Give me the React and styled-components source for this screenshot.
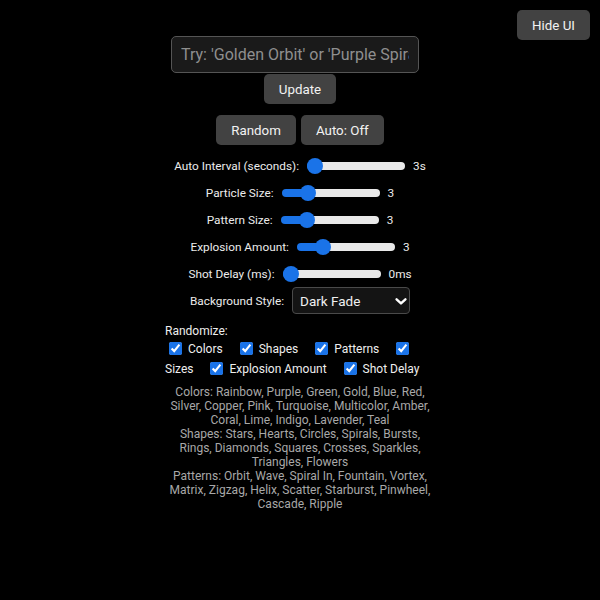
import React, { useState } from "react";
import styled, { createGlobalStyle } from "styled-components";

const Global = createGlobalStyle`
  html, body { margin: 0; padding: 0; background: #000; }
  body { font-family: Roboto, "Liberation Sans", sans-serif; color: #eee; }
  * { box-sizing: border-box; }
`;

const Page = styled.div`
  position: relative;
  width: 600px;
  min-height: 600px;
  background: #000;
  padding-top: 36px;
  display: flex;
  justify-content: center;
`;

const Button = styled.button`
  height: 30px;
  padding: 0 15px;
  border: none;
  border-radius: 5px;
  background: #424242;
  color: #f2f2f2;
  font-family: Roboto, "Liberation Sans", sans-serif;
  font-size: 13.33px;
  cursor: pointer;
`;

const HideButton = styled(Button)`
  position: absolute;
  top: 10px;
  right: 10px;
`;

const Panel = styled.div`
  width: 270px;
  display: flex;
  flex-direction: column;
  align-items: center;
`;

const Form = styled.div`
  width: 270px;
  display: flex;
  flex-wrap: wrap;
  justify-content: center;
  row-gap: 1px;
`;

const TextInput = styled.input`
  width: 248px;
  height: 37px;
  margin-right: 10px;
  padding: 0 9px;
  border: 1.5px solid #555;
  border-radius: 5px;
  background: #1a1a1a;
  color: #eee;
  font-family: Roboto, "Liberation Sans", sans-serif;
  font-size: 16px;
  outline: none;
  &::placeholder { color: #8f8f8f; }
`;

const ButtonRow = styled.div`
  display: flex;
  gap: 5px;
  margin-top: 11px;
`;

const Controls = styled.div`
  margin-top: 7px;
  display: flex;
  flex-direction: column;
`;

const Row = styled.div`
  height: 27px;
  display: flex;
  align-items: center;
  justify-content: center;
  font-size: 11.8px;
  color: #ececec;
`;

const Label = styled.span`
  margin-right: 8px;
`;

const Value = styled.span`
  margin-left: 8px;
`;

const BLUE = "#1a73e8";

const Range = styled.input.attrs({ type: "range" })`
  -webkit-appearance: none;
  appearance: none;
  width: 98px;
  height: 16px;
  margin: 0;
  background: transparent;
  &::-webkit-slider-runnable-track {
    height: 8px;
    border-radius: 4px;
    background: linear-gradient(
      to right,
      ${BLUE} 0,
      ${BLUE} ${(p) => p.$fill}px,
      #e9e9e9 ${(p) => p.$fill}px,
      #e9e9e9 100%
    );
  }
  &::-webkit-slider-thumb {
    -webkit-appearance: none;
    width: 16px;
    height: 16px;
    margin-top: -4px;
    border-radius: 50%;
    background: ${BLUE};
    border: none;
  }
`;

const SelectWrap = styled.div`
  position: relative;
  display: inline-flex;
`;

const Select = styled.select`
  -webkit-appearance: none;
  appearance: none;
  width: 118px;
  height: 27px;
  padding: 0 7px;
  border: 1px solid #4a4a4a;
  border-radius: 4px;
  background: #141414;
  color: #f0f0f0;
  font-family: Roboto, "Liberation Sans", sans-serif;
  font-size: 13.5px;
`;

const Chevron = styled.svg`
  position: absolute;
  right: 3px;
  top: 11px;
  pointer-events: none;
`;

const Randomize = styled.div`
  width: 270px;
  margin-top: 10px;
  font-size: 12px;
  color: #eee;
  text-align: left;
`;

const Title = styled.div`
  line-height: 14px;
`;

const Checks = styled.div`
  line-height: 20px;
  padding-top: 1px;
`;

const CheckLabel = styled.label`
  margin-right: 10px;
  input {
    accent-color: ${BLUE};
    width: 13px;
    height: 13px;
    margin: 3px 3px 3px 4px;
    vertical-align: -2px;
  }
`;

const Info = styled.p`
  width: 270px;
  margin: 6px 0 0;
  font-size: 12px;
  line-height: 14px;
  color: #a8a8a8;
  text-align: center;
`;

const sliders = [
  { label: "Auto Interval (seconds):", min: 3, max: 30, value: 3, unit: "s" },
  { label: "Particle Size:", min: 1, max: 10, value: 3, unit: "" },
  { label: "Pattern Size:", min: 1, max: 10, value: 3, unit: "" },
  { label: "Explosion Amount:", min: 1, max: 10, value: 3, unit: "" },
  { label: "Shot Delay (ms):", min: 0, max: 1000, value: 0, unit: "ms" },
];

const checks = ["Colors", "Shapes", "Patterns", "Sizes", "Explosion Amount", "Shot Delay"];

function Slider({ s }) {
  const [v, setV] = useState(s.value);
  const frac = (v - s.min) / (s.max - s.min);
  const fill = 8 + frac * 82;
  return (
    <Row>
      <Label>{s.label}</Label>
      <Range min={s.min} max={s.max} value={v} $fill={fill} onChange={(e) => setV(Number(e.target.value))} />
      <Value>
        {v}
        {s.unit}
      </Value>
    </Row>
  );
}

export default function App() {
  return (
    <Page>
      <Global />
      <HideButton>Hide UI</HideButton>
      <Panel>
        <Form>
          <TextInput placeholder="Try: 'Golden Orbit' or 'Purple Spiral'" />
          <Button>Update</Button>
        </Form>
        <ButtonRow>
          <Button>Random</Button>
          <Button>Auto: Off</Button>
        </ButtonRow>
        <Controls>
          {sliders.map((s) => (
            <Slider key={s.label} s={s} />
          ))}
          <Row>
            <Label>Background Style:</Label>
            <SelectWrap>
              <Select defaultValue="Dark Fade">
                <option>Dark Fade</option>
                <option>Black</option>
                <option>Trails</option>
              </Select>
              <Chevron width="12" height="7" viewBox="0 0 12 7">
                <path d="M1.6 1.3 L6 5.4 L10.4 1.3" fill="none" stroke="#fff" strokeWidth="2.4" strokeLinecap="round" strokeLinejoin="round" />
              </Chevron>
            </SelectWrap>
          </Row>
        </Controls>
        <Randomize>
          <Title>Randomize:</Title>
          <Checks>
            {checks.map((c) => (
              <React.Fragment key={c}>
                <CheckLabel>
                  <input type="checkbox" defaultChecked /> {c}
                </CheckLabel>{" "}
              </React.Fragment>
            ))}
          </Checks>
        </Randomize>
        <Info>
          Colors: Rainbow, Purple, Green, Gold, Blue, Red, Silver, Copper, Pink, Turquoise, Multicolor, Amber, Coral, Lime, Indigo, Lavender, Teal
          <br />
          Shapes: Stars, Hearts, Circles, Spirals, Bursts, Rings, Diamonds, Squares, Crosses, Sparkles, Triangles, Flowers
          <br />
          Patterns: Orbit, Wave, Spiral In, Fountain, Vortex, Matrix, Zigzag, Helix, Scatter, Starburst, Pinwheel, Cascade, Ripple
        </Info>
      </Panel>
    </Page>
  );
}
